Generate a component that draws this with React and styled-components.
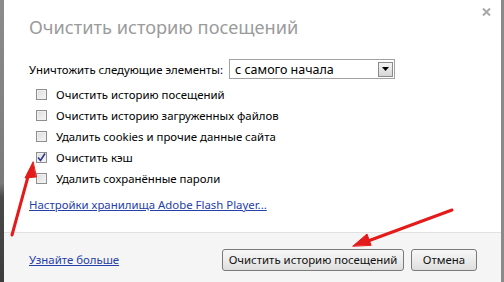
import React from 'react';
import styled, { createGlobalStyle } from 'styled-components';

const GlobalStyle = createGlobalStyle`
  html, body {
    margin: 0;
    padding: 0;
    background: #ffffff;
  }
  body {
    font-family: "Noto Sans", "Liberation Sans", sans-serif;
    font-size: 11.4px;
    color: #000;
  }
`;

const Page = styled.div`
  position: relative;
  display: flex;
  width: 504px;
  height: 282px;
  overflow: hidden;
`;

const LeftEdge = styled.div`
  flex: none;
  width: 4px;
  background: linear-gradient(to bottom, #8c8c8c 0%, #7a7a7a 65%, #4a4a4a 70%, #3c3c3c 100%);
`;

const RightEdge = styled.div`
  flex: none;
  width: 3px;
  background: #8a8a8a;
`;

const Dialog = styled.div`
  flex: 1;
  display: flex;
  flex-direction: column;
  background: #fff;
`;

const Header = styled.div`
  position: relative;
  padding: 15px 0 0 25px;
  height: 44px;
  box-sizing: border-box;
`;

const Title = styled.h1`
  margin: 0;
  font-weight: 400;
  font-size: 18.2px;
  line-height: 24px;
  color: #9b9b9b;
`;

const Close = styled.svg`
  position: absolute;
  top: 8px;
  right: 10px;
`;

const Body = styled.div`
  flex: 1;
  padding: 15px 0 0 25px;
  display: flex;
  flex-direction: column;
`;

const PeriodRow = styled.div`
  display: flex;
  align-items: center;
  gap: 6px;
  height: 20px;
`;

const Select = styled.div`
  display: flex;
  align-items: center;
  justify-content: space-between;
  width: 166px;
  height: 20px;
  box-sizing: border-box;
  border: 1px solid #a2a2a2;
  padding: 0 1px 0 5px;
  font-size: 12.5px;
  background: #fff;
`;

const SelectArrow = styled.span`
  display: flex;
  align-items: center;
  justify-content: center;
  width: 15px;
  height: 15px;
  box-sizing: border-box;
  border: 1px solid #8a8a8a;
  background: linear-gradient(#f4f4f4, #d6d6d6);
`;

const Options = styled.div`
  display: flex;
  flex-direction: column;
  padding: 5px 0 0 7px;
`;

const OptionRow = styled.label`
  display: flex;
  align-items: center;
  gap: 9px;
  height: 21px;
`;

const Box = styled.span`
  flex: none;
  width: 11px;
  height: 11px;
  box-sizing: border-box;
  border: 1px solid #8e8e8e;
  background: linear-gradient(135deg, #dcdcdc, #f6f6f6);
  box-shadow: inset 0 0 0 1px #f0f0f0;
  display: flex;
  align-items: center;
  justify-content: center;
`;

const Link = styled.a`
  color: #2540a8;
  text-decoration: underline;
  cursor: pointer;
`;

const FlashLink = styled(Link)`
  margin-top: 8px;
  line-height: 16px;
`;

const Footer = styled.div`
  flex: none;
  height: 50px;
  border-top: 1px solid #e1e1e1;
  background: #f5f5f5;
  display: flex;
  align-items: center;
  justify-content: space-between;
  padding: 0 24px 0 25px;
  box-sizing: border-box;
`;

const Buttons = styled.div`
  display: flex;
  gap: 7px;
  margin-top: 4px;
`;

const Button = styled.button`
  height: 22px;
  width: ${p => p.$width}px;
  padding: 0;
  border: 1px solid #7a7a7a;
  border-radius: 3px;
  background: linear-gradient(#f7f7f7 0%, #ececec 50%, #dedede 100%);
  font-family: inherit;
  font-size: 11.4px;
  color: #111;
`;

const FooterLink = styled(Link)`
  margin-top: 4px;
`;

const Annotations = styled.svg`
  position: absolute;
  left: 0;
  top: 0;
  pointer-events: none;
`;

const options = [
  { label: 'Очистить историю посещений', checked: false },
  { label: 'Очистить историю загруженных файлов', checked: false },
  { label: 'Удалить cookies и прочие данные сайта', checked: false },
  { label: 'Очистить кэш', checked: true },
  { label: 'Удалить сохранённые пароли', checked: false },
];

function Checkbox({ checked }) {
  return (
    <Box>
      {checked && (
        <svg width="9" height="9" viewBox="0 0 9 9">
          <path d="M1 4.5 L3.5 7.5 L8 0.5" fill="none" stroke="#2b3a8c" strokeWidth="1.6" />
        </svg>
      )}
    </Box>
  );
}

function App() {
  return (
    <Page>
      <GlobalStyle />
      <LeftEdge />
      <Dialog>
        <Header>
          <Title>Очистить историю посещений</Title>
          <Close width="9" height="8" viewBox="0 0 9 8">
            <path d="M1 0.5 L8 7.5 M8 0.5 L1 7.5" stroke="#a8a8a8" strokeWidth="2" />
          </Close>
        </Header>
        <Body>
          <PeriodRow>
            <span>Уничтожить следующие элементы:</span>
            <Select>
              <span>с самого начала</span>
              <SelectArrow>
                <svg width="7" height="4" viewBox="0 0 7 4">
                  <path d="M0 0 H7 L3.5 4 Z" fill="#000" />
                </svg>
              </SelectArrow>
            </Select>
          </PeriodRow>
          <Options>
            {options.map(o => (
              <OptionRow key={o.label}>
                <Checkbox checked={o.checked} />
                <span>{o.label}</span>
              </OptionRow>
            ))}
          </Options>
          <FlashLink>Настройки хранилища Adobe Flash Player...</FlashLink>
        </Body>
        <Footer>
          <FooterLink>Узнайте больше</FooterLink>
          <Buttons>
            <Button $width={182}>Очистить историю посещений</Button>
            <Button $width={66}>Отмена</Button>
          </Buttons>
        </Footer>
      </Dialog>
      <RightEdge />
      <Annotations width="504" height="282" viewBox="0 0 504 282">
        <g fill="#e41b1b" stroke="#e41b1b" strokeLinecap="round">
          <line x1="12" y1="235" x2="29" y2="173" strokeWidth="3" />
          <path d="M33 162 L25 178 L36 177 Z" />
          <line x1="452" y1="210" x2="368" y2="241" strokeWidth="3" />
          <path d="M353 246 L367 234 L371 245 Z" />
        </g>
      </Annotations>
    </Page>
  );
}

export default App;
